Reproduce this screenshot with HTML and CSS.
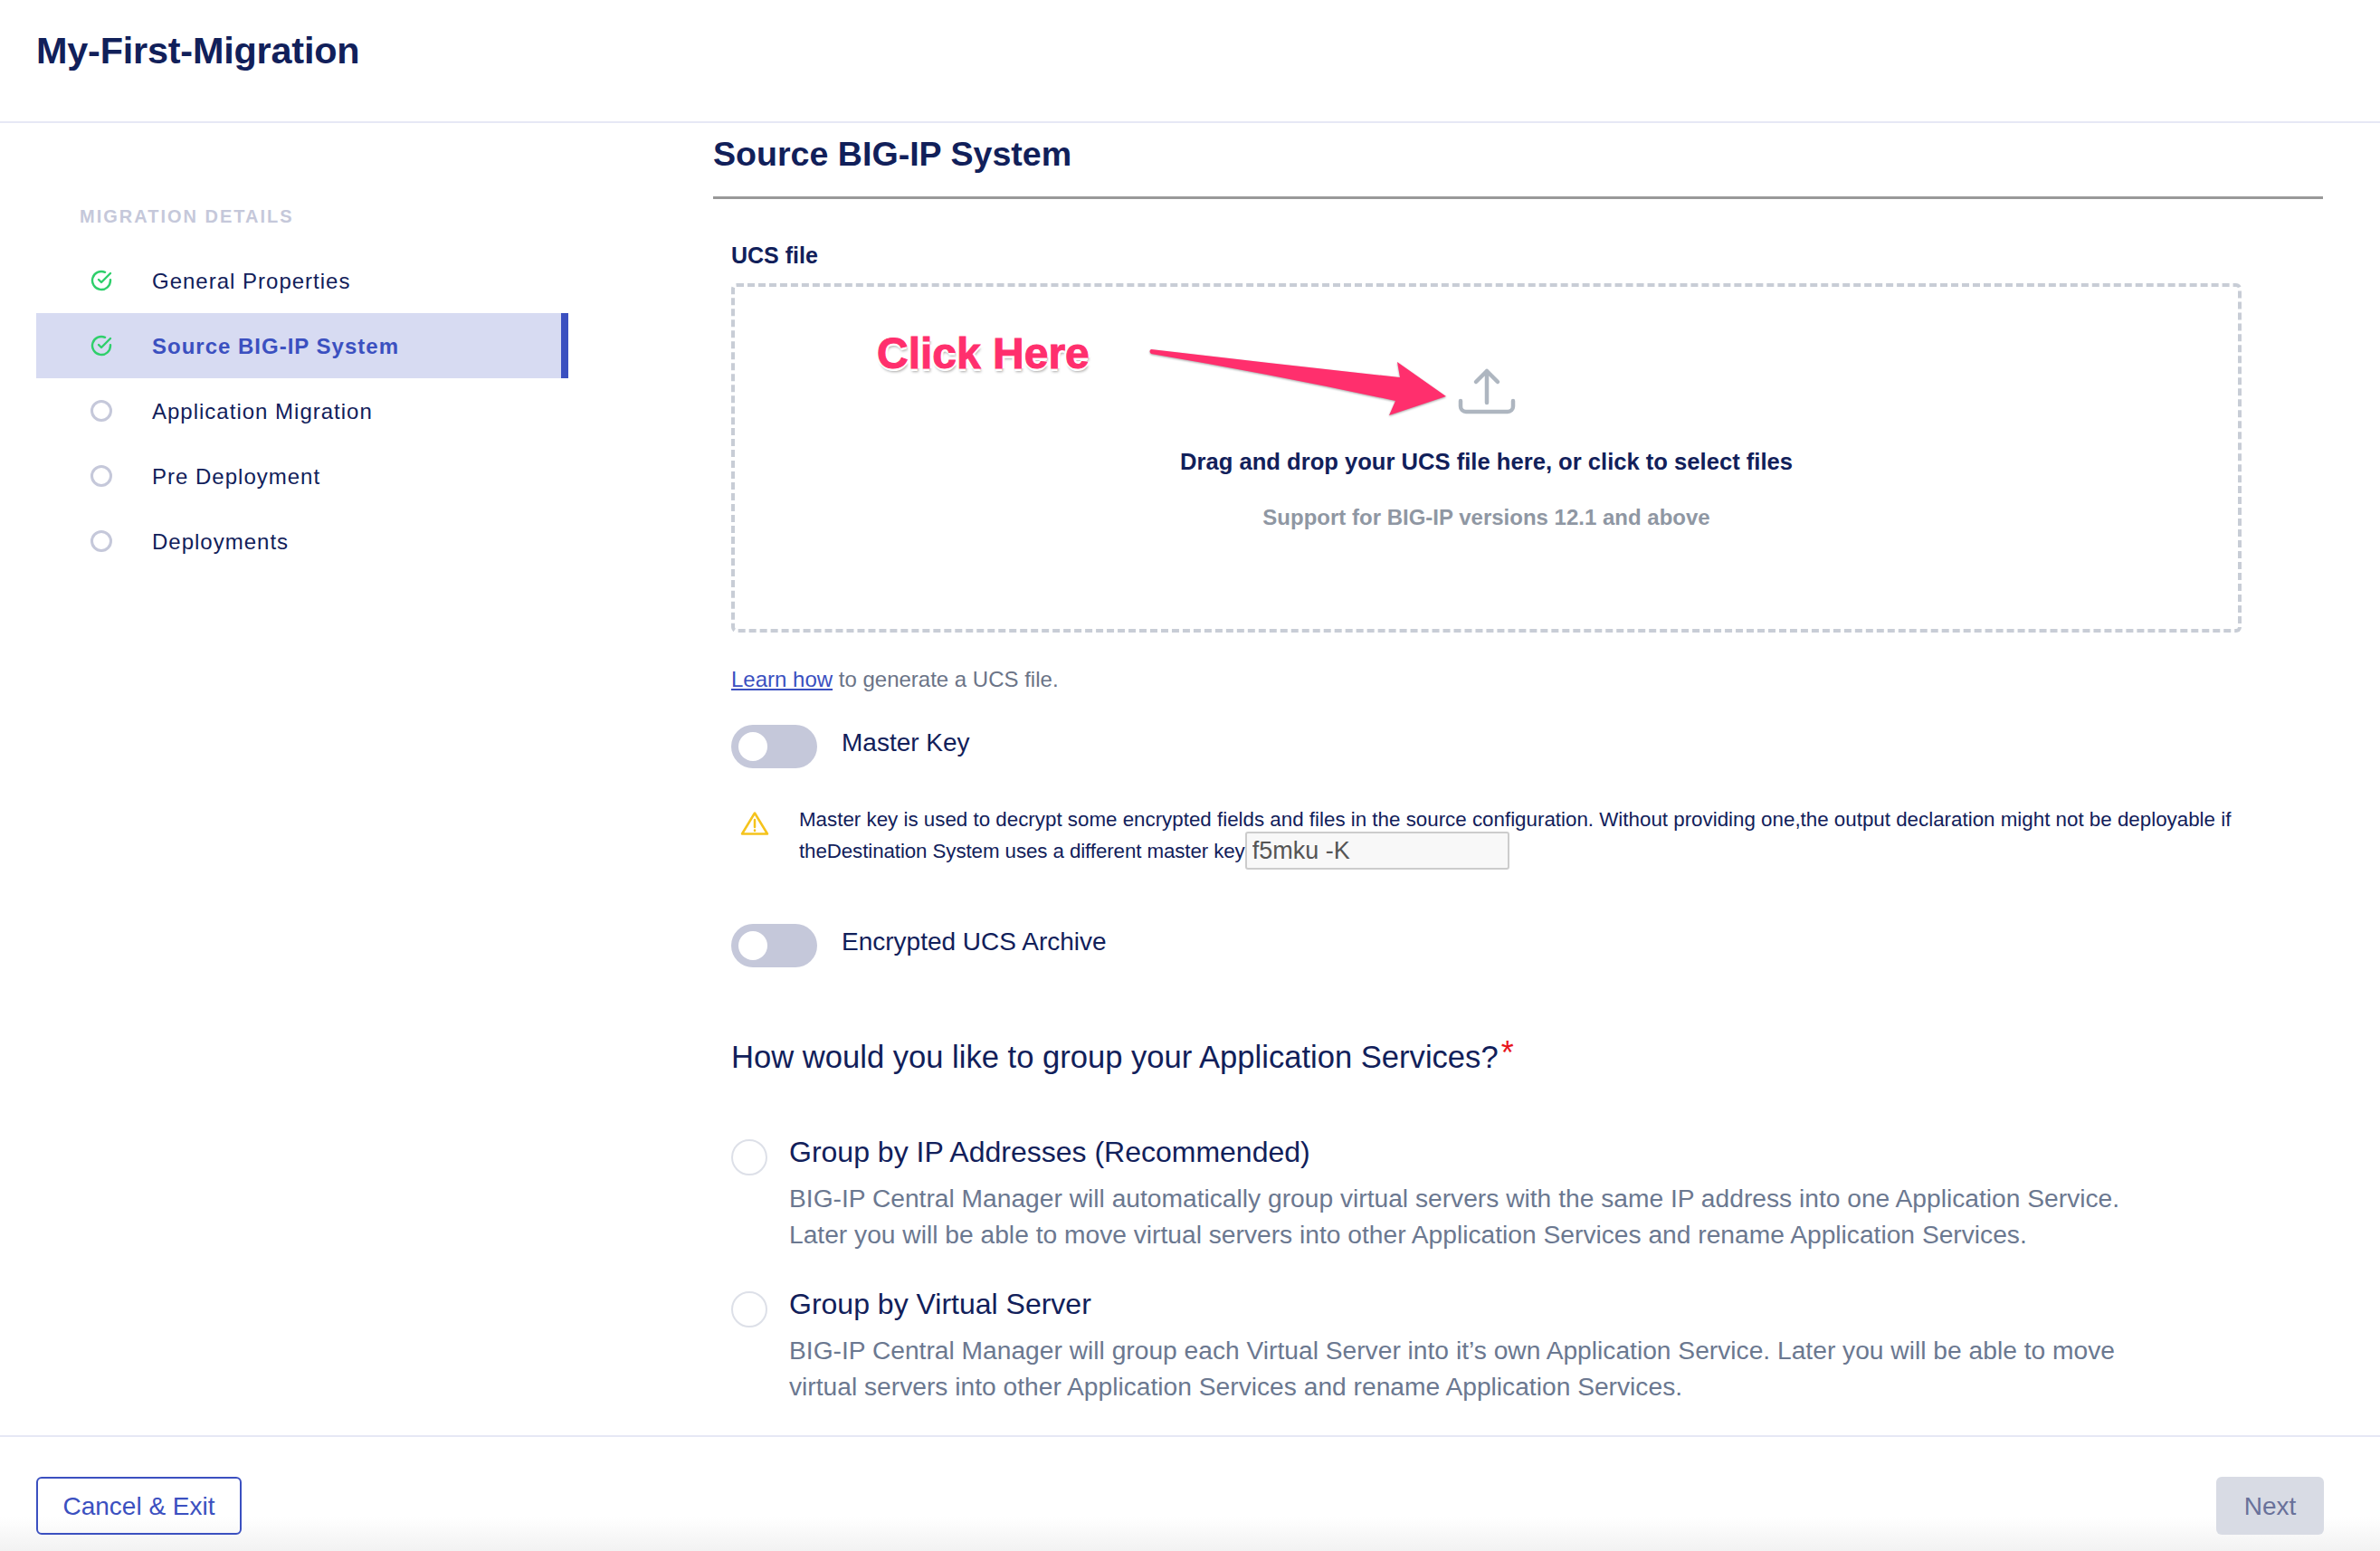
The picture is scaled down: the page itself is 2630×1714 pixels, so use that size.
FILE: index.html
```html
<!DOCTYPE html>
<html lang="en">

<head>
  <meta charset="UTF-8">
  <title>My-First-Migration</title>
  <link rel="stylesheet" href="styles.css">
</head>

<body>

  <header class="page-header">
    <h1>My-First-Migration</h1>
  </header>

  <div class="page-body">
    <nav class="sidebar">
      <div class="sidebar-title">MIGRATION DETAILS</div>
      <ul class="steps">
        <li class="step">
          <svg class="step-check" viewBox="0 0 24 24"><path d="M22 11.08V12a10 10 0 1 1-5.93-9.14"/><path d="M22 4 12 14.01l-3-3"/></svg>
          <span>General Properties</span>
        </li>
        <li class="step step-active">
          <svg class="step-check" viewBox="0 0 24 24"><path d="M22 11.08V12a10 10 0 1 1-5.93-9.14"/><path d="M22 4 12 14.01l-3-3"/></svg>
          <span>Source BIG-IP System</span>
        </li>
        <li class="step"><i class="step-circle"></i><span>Application Migration</span></li>
        <li class="step"><i class="step-circle"></i><span>Pre Deployment</span></li>
        <li class="step"><i class="step-circle"></i><span>Deployments</span></li>
      </ul>
    </nav>

    <main class="content">
      <h2 class="section-title">Source BIG-IP System</h2>

      <div class="form">
        <label class="field-label">UCS file</label>
        <div class="dropzone">
          <svg class="upload-icon" viewBox="0 0 64 52">
            <path d="M32 39V4M20 16 32 4l12 12"/>
            <path d="M3 37v6a6 6 0 0 0 6 6h46a6 6 0 0 0 6-6v-6"/>
          </svg>
          <p class="drop-title">Drag and drop your UCS file here, or click to select files</p>
          <p class="drop-note">Support for BIG-IP versions 12.1 and above</p>

          <div class="click-here">Click Here</div>
          <svg class="click-arrow" viewBox="0 0 334 80">
            <path d="M4 2 Q140 18 279 33 L276 16 L330 54 L267 75 L274 59 Q140 30 4 7 Q1 4 4 2 Z"/>
          </svg>
        </div>

        <p class="learn"><a href="#">Learn how</a> to generate a UCS file.</p>

        <div class="toggle-row">
          <span class="toggle"><i class="knob"></i></span>
          <span class="toggle-label">Master Key</span>
        </div>

        <div class="warning">
          <svg class="warning-icon" viewBox="0 0 32 28">
            <path d="M16 2.5 2 25.5h28z"/>
            <path d="M16 10v8M16 21.5v.5"/>
          </svg>
          <p>Master key is used to decrypt some encrypted fields and files in the source configuration. Without providing one,the output declaration might not be deployable if<br><span class="warning-tight">theDestination System uses a different master key</span><input class="key-input" type="text" value="f5mku -K" readonly></p>
        </div>

        <div class="toggle-row toggle-row-second">
          <span class="toggle"><i class="knob"></i></span>
          <span class="toggle-label">Encrypted UCS Archive</span>
        </div>

        <h3 class="question">How would you like to group your Application Services?<sup class="required">*</sup></h3>

        <div class="option option-first">
          <span class="radio"></span>
          <div>
            <div class="option-title">Group by IP Addresses (Recommended)</div>
            <p class="option-text">BIG-IP Central Manager will automatically group virtual servers with the same IP address into one Application Service.<br>Later you will be able to move virtual servers into other Application Services and rename Application Services.</p>
          </div>
        </div>

        <div class="option">
          <span class="radio"></span>
          <div>
            <div class="option-title">Group by Virtual Server</div>
            <p class="option-text">BIG-IP Central Manager will group each Virtual Server into it’s own Application Service. Later you will be able to move<br>virtual servers into other Application Services and rename Application Services.</p>
          </div>
        </div>
      </div>
    </main>
  </div>

  <footer class="page-footer">
    <button class="btn btn-cancel">Cancel &amp; Exit</button>
    <button class="btn btn-next">Next</button>
  </footer>

</body>

</html>
```

FILE: styles.css
```css
* {
  box-sizing: border-box;
}

body {
  display: flex;
  flex-direction: column;
  width: 2630px;
  height: 1714px;
  margin: 0;
  overflow: hidden;
  font-family: "Liberation Sans", Arial, sans-serif;
  color: #11205a;
  background-color: #fff;
}

h1, h2, h3, p, ul {
  margin: 0;
  padding: 0;
}

/* header */
.page-header {
  flex: none;
  height: 136px;
  padding: 31px 40px 0;
  border-bottom: 2px solid #e6e8f5;
}

.page-header h1 {
  font-size: 41.4px;
  line-height: 50px;
  font-weight: bold;
  letter-spacing: -0.2px;
}

.page-body {
  flex: 1;
  display: flex;
  min-height: 0;
}

/* sidebar */
.sidebar {
  flex: none;
  width: 788px;
  padding: 91px 0 0 40px;
}

.sidebar-title {
  padding-left: 48px;
  font-size: 20px;
  line-height: 24px;
  font-weight: bold;
  letter-spacing: 2px;
  color: #c5c8da;
}

.steps {
  width: 588px;
  margin-top: 23px;
  list-style: none;
}

.step {
  display: flex;
  align-items: center;
  gap: 44px;
  height: 72px;
  padding-left: 60px;
  font-size: 24px;
  letter-spacing: 1px;
}

.step span {
  padding-top: 2px;
}

.step-active {
  font-weight: bold;
  color: #3b50c0;
  background-color: #d7dbf2;
  border-right: 8px solid #3b50c0;
}

.step-check {
  width: 24px;
  height: 24px;
  fill: none;
  stroke: #2fcf6b;
  stroke-width: 2.4;
  stroke-linecap: round;
  stroke-linejoin: round;
}

.step-circle {
  width: 24px;
  height: 24px;
  border: 3px solid #c5c8da;
  border-radius: 50%;
}

/* main column */
.content {
  flex: none;
  width: 1779px;
  overflow: hidden;
}

.section-title {
  height: 84px;
  padding-top: 14px;
  font-size: 37.6px;
  line-height: 40px;
  font-weight: bold;
  border-bottom: 3px solid #999;
}

.form {
  padding-left: 20px;
}

.field-label {
  display: block;
  margin-top: 46px;
  font-size: 25px;
  line-height: 32px;
  font-weight: bold;
}

.dropzone {
  position: relative;
  display: flex;
  flex-direction: column;
  align-items: center;
  width: 1669px;
  height: 386px;
  margin-top: 15px;
  padding-top: 89px;
  border: 4px dashed #c8cdd6;
  border-radius: 6px;
}

.upload-icon {
  width: 64px;
  height: 52px;
  fill: none;
  stroke: #aeb6c0;
  stroke-width: 4.5;
  stroke-linecap: round;
  stroke-linejoin: round;
}

.drop-title {
  margin-top: 36px;
  font-size: 25.6px;
  line-height: 32px;
  font-weight: bold;
}

.drop-note {
  margin-top: 30px;
  font-size: 24px;
  line-height: 32px;
  font-weight: bold;
  color: #8f97a3;
}

/* annotation drawn over the dropzone */
.click-here {
  position: absolute;
  left: 157px;
  top: 44px;
  font-size: 48px;
  line-height: 60px;
  font-weight: bold;
  color: #ff2f6d;
  -webkit-text-stroke: 1px #ff2f6d;
  text-shadow: -3px 0 0 #fff, 3px 0 0 #fff, 0 -3px 0 #fff, 0 3px 0 #fff, 1px 4px 3px rgba(0, 0, 0, 0.35);
}

.click-arrow {
  position: absolute;
  left: 456px;
  top: 67px;
  width: 334px;
  height: 80px;
  fill: #ff2f6d;
  filter: drop-shadow(0 1px 1px rgba(0, 0, 0, 0.35));
}

.learn {
  margin-top: 36px;
  font-size: 24px;
  line-height: 32px;
  color: #6b7487;
}

.learn a {
  color: #3b50c0;
}

.toggle-row {
  display: flex;
  align-items: flex-start;
  gap: 27px;
  margin-top: 34px;
}

.toggle-row-second {
  margin-top: 63px;
}

.toggle {
  display: flex;
  align-items: center;
  width: 95px;
  height: 48px;
  padding-left: 8px;
  background-color: #c5c8da;
  border-radius: 24px;
}

.knob {
  width: 32px;
  height: 32px;
  background-color: #fff;
  border-radius: 50%;
}

.toggle-label {
  font-size: 28px;
  line-height: 40px;
}

.warning {
  display: flex;
  align-items: flex-start;
  gap: 33px;
  margin-top: 39px;
  padding-left: 10px;
  font-size: 22.35px;
  line-height: 35px;
}

.warning-tight {
  letter-spacing: -0.1px;
}

.warning-icon {
  flex: none;
  width: 32px;
  height: 28px;
  margin-top: 8px;
  fill: none;
  stroke: #f5c31c;
  stroke-width: 2.5;
  stroke-linecap: round;
  stroke-linejoin: round;
}

.key-input {
  position: relative;
  top: -2px;
  width: 292px;
  height: 42px;
  margin: -6px 0;
  padding: 0 6px;
  vertical-align: middle;
  font-family: inherit;
  font-size: 27px;
  color: #555;
  background-color: #f8f8f8;
  border: 2px solid #ccc;
  border-radius: 3px;
  outline: none;
}

.question {
  margin-top: 77px;
  font-size: 34.6px;
  line-height: 44px;
  font-weight: normal;
}

.required {
  margin-left: 3px;
  font-size: 36px;
  line-height: 0;
  vertical-align: 4px;
  color: #e8141c;
}

.option {
  display: flex;
  align-items: flex-start;
  gap: 24px;
  margin-top: 37px;
}

.option-first {
  margin-top: 63px;
}

.radio {
  flex: none;
  width: 40px;
  height: 40px;
  margin-top: 6px;
  border: 2px solid #dde0e8;
  border-radius: 50%;
}

.option-title {
  font-size: 32px;
  line-height: 40px;
}

.option-text {
  margin-top: 11px;
  font-size: 28.2px;
  line-height: 40px;
  color: #6b7890;
}

/* footer */
.page-footer {
  flex: none;
  display: flex;
  justify-content: space-between;
  height: 128px;
  padding: 44px 62px 0 40px;
  background: linear-gradient(#fff 70%, #f2f2f2);
  border-top: 2px solid #e6e8f5;
}

.btn {
  height: 64px;
  padding-top: 2px;
  font-family: inherit;
  font-size: 28px;
  border-radius: 6px;
}

.btn-cancel {
  width: 227px;
  color: #3b50c0;
  background: transparent;
  border: 2px solid #3b50c0;
}

.btn-next {
  width: 119px;
  color: #69719a;
  background-color: #d8dbe4;
  border: none;
}
```
